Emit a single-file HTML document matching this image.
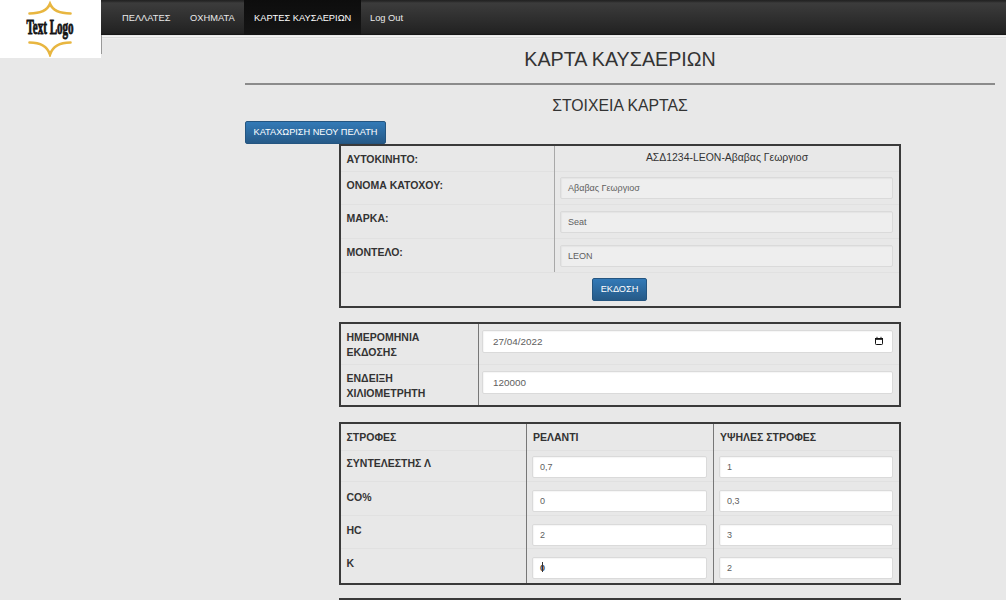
<!DOCTYPE html>
<html><head><meta charset="utf-8">
<style>
html,body{margin:0;padding:0;}
body{width:1006px;height:600px;overflow:hidden;background:#e8e8e8;font-family:"Liberation Sans",sans-serif;position:relative;color:#333;}
.abs{position:absolute;}
#nav{left:101px;top:0;width:905px;height:35px;background:linear-gradient(#232323 0px,#262626 1px,#3c3c3c 3px,#222 33px,#1c1c1c 34px,#141414 35px);}
#nav .it{position:absolute;top:0;height:35px;line-height:36px;font-size:9.3px;color:#eaeaea;white-space:nowrap;}
#nav .act{background:linear-gradient(#0d0d0d,#151515);color:#fff;}
#logo{left:0;top:0;width:101px;height:58px;background:#fff;}
#vline{left:101px;top:35px;width:1px;height:19px;background:#999;}
.title{left:245px;width:750px;text-align:center;color:#333;white-space:nowrap;}
#hr{left:245px;top:83px;width:750px;height:2px;background:#8b8b8b;}
.btn{background:linear-gradient(#337ab7,#265a88);color:#fff;border-radius:2px;font-size:9.2px;text-align:center;white-space:nowrap;border:1px solid #245580;box-sizing:border-box;}
.tbl{border:2px solid #3a3a3a;box-sizing:border-box;}
.lbl{font-size:10.5px;font-weight:bold;color:#333;white-space:nowrap;}
.inp{box-sizing:border-box;border:1px solid #dadada;box-shadow:inset 1px 1px 1px rgba(0,0,0,0.04);border-radius:2px;background:#fff;font-size:9px;color:#606060;padding-left:9px;white-space:nowrap;}
.ro{background:#eee;}
.rowline{height:1px;background:#e1e1e1;}
.vcol{width:1px;background:#999;}
</style></head>
<body>
<div id="logo" class="abs">
  <svg width="101" height="57" viewBox="0 0 101 57">
    <path d="M29.5 13.5 Q46 13.5 50 3.8 Q54 13.5 70.5 13.5" fill="none" stroke="#e8b640" stroke-width="2.6" stroke-linecap="round"/>
    <path d="M29.5 42.5 Q46 42.5 50 54.5 Q54 42.5 70.5 42.5" fill="none" stroke="#e8b640" stroke-width="2.6" stroke-linecap="round"/>
    <text x="0" y="0" transform="translate(50 33.5) scale(0.54 1)" text-anchor="middle" font-family="Liberation Serif" font-weight="bold" font-size="20.5" fill="#141414" stroke="#141414" stroke-width="0.9">Text Logo</text>
  </svg>
</div>
<div id="nav" class="abs">
  <div class="it" style="left:21px;">ΠΕΛΛΑΤΕΣ</div>
  <div class="it" style="left:89px;">ΟΧΗΜΑΤΑ</div>
  <div class="it act" style="left:143px;width:117px;padding-left:10px;box-sizing:border-box;">ΚΑΡΤΕΣ ΚΑΥΣΑΕΡΙΩΝ</div>
  <div class="it" style="left:269px;">Log Out</div>
</div>
<div class="abs" style="left:102px;top:36px;width:904px;height:1px;background:#f3f3f3;"></div>
<div class="abs" style="left:102px;top:37px;width:904px;height:1px;background:#dcdcdc;"></div>
<div class="abs" style="left:102px;top:38px;width:904px;height:1px;background:#ededed;"></div>
<div id="vline" class="abs"></div>

<div class="abs title" style="top:48px;font-size:19.7px;">ΚΑΡΤΑ ΚΑΥΣΑΕΡΙΩΝ</div>
<div id="hr" class="abs"></div>
<div class="abs title" style="top:97px;font-size:15.8px;">ΣΤΟΙΧΕΙΑ ΚΑΡΤΑΣ</div>
<div class="abs btn" style="left:245px;top:121px;width:141px;height:23px;line-height:21px;">ΚΑΤΑΧΩΡΙΣΗ ΝΕΟΥ ΠΕΛΑΤΗ</div>

<!-- table 1 -->
<div class="abs tbl" style="left:339px;top:144px;width:562px;height:164px;"></div>
<div class="abs rowline" style="left:341px;top:171px;width:558px;"></div>
<div class="abs rowline" style="left:341px;top:204px;width:558px;"></div>
<div class="abs rowline" style="left:341px;top:238px;width:558px;"></div>
<div class="abs rowline" style="left:341px;top:272px;width:558px;"></div>
<div class="abs vcol" style="left:554px;top:146px;height:126px;background:#a8a8a8;"></div>
<div class="abs lbl" style="left:346.5px;top:153px;">ΑΥΤΟΚΙΝΗΤΟ:</div>
<div class="abs lbl" style="left:346.5px;top:179px;">ΟΝΟΜΑ ΚΑΤΟΧΟΥ:</div>
<div class="abs lbl" style="left:346.5px;top:212px;">ΜΑΡΚΑ:</div>
<div class="abs lbl" style="left:346.5px;top:246px;">ΜΟΝΤΕΛΟ:</div>
<div class="abs" style="left:555px;width:344px;top:152px;text-align:center;font-size:10.45px;color:#333;">ΑΣΔ1234-LEON-Αβαβας Γεωργιοσ</div>
<div class="abs inp ro" style="padding-left:7px;left:560px;top:177px;width:333px;height:22px;line-height:20px;">Αβαβας Γεωργιοσ</div>
<div class="abs inp ro" style="padding-left:7px;left:560px;top:211px;width:333px;height:22px;line-height:20px;">Seat</div>
<div class="abs inp ro" style="padding-left:7px;left:560px;top:245px;width:333px;height:22px;line-height:20px;">LEON</div>
<div class="abs btn" style="left:592px;top:278px;width:55px;height:23px;line-height:21px;">ΕΚΔΟΣΗ</div>

<!-- table 2 -->
<div class="abs tbl" style="left:339px;top:322px;width:562px;height:85px;"></div>
<div class="abs rowline" style="left:341px;top:364px;width:558px;"></div>
<div class="abs vcol" style="left:478px;top:324px;height:81px;background:#777;"></div>
<div class="abs lbl" style="left:346.5px;top:330px;line-height:14.7px;">ΗΜΕΡΟΜΗΝΙΑ<br>ΕΚΔΟΣΗΣ</div>
<div class="abs lbl" style="left:346.5px;top:371px;line-height:14.7px;">ΕΝΔΕΙΞΗ<br>ΧΙΛΙΟΜΕΤΡΗΤΗ</div>
<div class="abs inp" style="padding-left:10px;font-size:9.9px;left:482px;top:330px;width:411px;height:23px;line-height:22px;">27/04/2022</div>
<svg class="abs" style="left:874px;top:336px;" width="10" height="10" viewBox="0 0 10 10"><rect x="1.5" y="2.5" width="7" height="6" rx="0.8" fill="none" stroke="#111" stroke-width="1"/><rect x="1" y="2" width="8" height="1.8" fill="#111"/><rect x="2.5" y="0.8" width="1" height="1.5" fill="#333"/><rect x="6.5" y="0.8" width="1" height="1.5" fill="#333"/></svg>
<div class="abs inp" style="padding-left:10px;font-size:9.9px;left:482px;top:371px;width:411px;height:23px;line-height:22px;">120000</div>

<!-- table 3 -->
<div class="abs tbl" style="left:339px;top:422px;width:562px;height:163px;"></div>
<div class="abs rowline" style="left:341px;top:450px;width:558px;"></div>
<div class="abs rowline" style="left:341px;top:481px;width:558px;"></div>
<div class="abs rowline" style="left:341px;top:515px;width:558px;"></div>
<div class="abs rowline" style="left:341px;top:548px;width:558px;"></div>
<div class="abs vcol" style="left:526px;top:424px;height:159px;background:#777;"></div>
<div class="abs vcol" style="left:713px;top:424px;height:159px;background:#777;"></div>
<div class="abs lbl" style="left:346.5px;top:431px;">ΣΤΡΟΦΕΣ</div>
<div class="abs lbl" style="left:533px;top:431px;">ΡΕΛΑΝΤΙ</div>
<div class="abs lbl" style="left:720px;top:431px;">ΥΨΗΛΕΣ ΣΤΡΟΦΕΣ</div>
<div class="abs lbl" style="left:346.5px;top:457px;">ΣΥΝΤΕΛΕΣΤΗΣ Λ</div>
<div class="abs lbl" style="left:346.5px;top:491px;">CO%</div>
<div class="abs lbl" style="left:346.5px;top:524px;">HC</div>
<div class="abs lbl" style="left:346.5px;top:557px;">K</div>
<div class="abs inp" style="padding-left:7px;left:532px;top:456px;width:175px;height:22px;line-height:20px;">0,7</div>
<div class="abs inp" style="padding-left:7px;left:719px;top:456px;width:174px;height:22px;line-height:20px;">1</div>
<div class="abs inp" style="padding-left:7px;left:532px;top:490px;width:175px;height:22px;line-height:20px;">0</div>
<div class="abs inp" style="padding-left:7px;left:719px;top:490px;width:174px;height:22px;line-height:20px;">0,3</div>
<div class="abs inp" style="padding-left:7px;left:532px;top:524px;width:175px;height:22px;line-height:20px;">2</div>
<div class="abs inp" style="padding-left:7px;left:719px;top:524px;width:174px;height:22px;line-height:20px;">3</div>
<div class="abs inp" style="padding-left:7px;left:532px;top:557px;width:175px;height:22px;line-height:20px;color:#444;font-weight:bold;">0</div>
<div class="abs" style="left:542px;top:562px;width:1px;height:10px;background:#333;"></div>
<div class="abs inp" style="padding-left:7px;left:719px;top:557px;width:174px;height:22px;line-height:20px;">2</div>

<!-- table 4 -->
<div class="abs tbl" style="left:339px;top:598px;width:562px;height:40px;"></div>
</body></html>
